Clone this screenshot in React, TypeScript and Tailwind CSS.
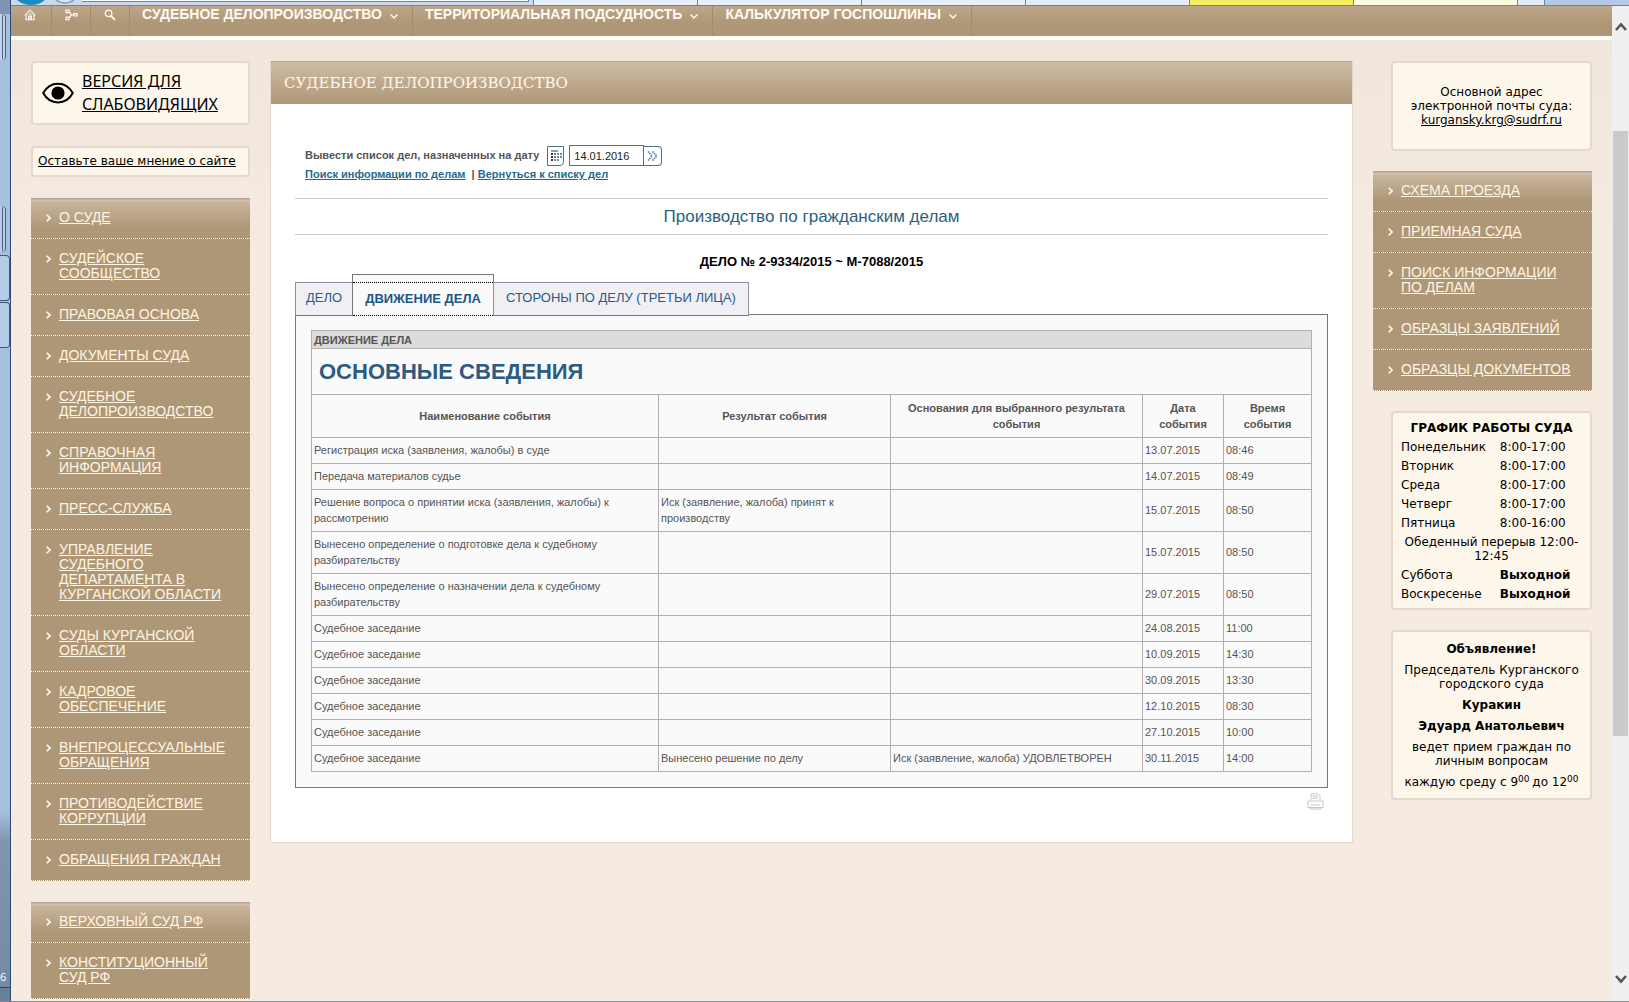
import React from 'react';

const leftMenu = [
  'О СУДЕ',
  'СУДЕЙСКОЕ СООБЩЕСТВО',
  'ПРАВОВАЯ ОСНОВА',
  'ДОКУМЕНТЫ СУДА',
  'СУДЕБНОЕ ДЕЛОПРОИЗВОДСТВО',
  'СПРАВОЧНАЯ ИНФОРМАЦИЯ',
  'ПРЕСС-СЛУЖБА',
  'УПРАВЛЕНИЕ СУДЕБНОГО ДЕПАРТАМЕНТА В КУРГАНСКОЙ ОБЛАСТИ',
  'СУДЫ КУРГАНСКОЙ ОБЛАСТИ',
  'КАДРОВОЕ ОБЕСПЕЧЕНИЕ',
  'ВНЕПРОЦЕССУАЛЬНЫЕ ОБРАЩЕНИЯ',
  'ПРОТИВОДЕЙСТВИЕ КОРРУПЦИИ',
  'ОБРАЩЕНИЯ ГРАЖДАН',
];

const courtsMenu = ['ВЕРХОВНЫЙ СУД РФ', 'КОНСТИТУЦИОННЫЙ СУД РФ'];

const rightMenu = [
  'СХЕМА ПРОЕЗДА',
  'ПРИЕМНАЯ СУДА',
  'ПОИСК ИНФОРМАЦИИ ПО ДЕЛАМ',
  'ОБРАЗЦЫ ЗАЯВЛЕНИЙ',
  'ОБРАЗЦЫ ДОКУМЕНТОВ',
];

const topMenu = ['СУДЕБНОЕ ДЕЛОПРОИЗВОДСТВО', 'ТЕРРИТОРИАЛЬНАЯ ПОДСУДНОСТЬ', 'КАЛЬКУЛЯТОР ГОСПОШЛИНЫ'];

const events = [
  ['Регистрация иска (заявления, жалобы) в суде', '', '', '13.07.2015', '08:46'],
  ['Передача материалов судье', '', '', '14.07.2015', '08:49'],
  [
    'Решение вопроса о принятии иска (заявления, жалобы) к рассмотрению',
    'Иск (заявление, жалоба) принят к производству',
    '',
    '15.07.2015',
    '08:50',
  ],
  ['Вынесено определение о подготовке дела к судебному разбирательству', '', '', '15.07.2015', '08:50'],
  ['Вынесено определение о назначении дела к судебному разбирательству', '', '', '29.07.2015', '08:50'],
  ['Судебное заседание', '', '', '24.08.2015', '11:00'],
  ['Судебное заседание', '', '', '10.09.2015', '14:30'],
  ['Судебное заседание', '', '', '30.09.2015', '13:30'],
  ['Судебное заседание', '', '', '12.10.2015', '08:30'],
  ['Судебное заседание', '', '', '27.10.2015', '10:00'],
  ['Судебное заседание', 'Вынесено решение по делу', 'Иск (заявление, жалоба) УДОВЛЕТВОРЕН', '30.11.2015', '14:00'],
];

const hours = [
  ['Понедельник', '8:00-17:00'],
  ['Вторник', '8:00-17:00'],
  ['Среда', '8:00-17:00'],
  ['Четверг', '8:00-17:00'],
  ['Пятница', '8:00-16:00'],
];

const Card: React.FC<{ className?: string; children: React.ReactNode }> = ({ className = '', children }) => (
  <section className={`rounded border-2 border-[#e3d9cd] bg-[#fdf6eb] text-black ${className}`}>{children}</section>
);

const SideMenu: React.FC<{ items: string[]; label: string }> = ({ items, label }) => (
  <nav
    aria-label={label}
    className="bg-[#ae9777] bg-[linear-gradient(to_bottom,#b5a48e_0px,#b5a48e_1px,#d3c3b0_2px,#c7b49b_5px,#ae9777_30px)]"
  >
    <ul>
      {items.map((item) => (
        <li key={item} className="flex gap-2 border-b border-dotted border-[#fff8ea] pt-3 pr-4 pb-[13px] pl-[15px]">
          <svg className="mt-1 h-2 w-[5px] shrink-0" viewBox="0 0 5 8" fill="none" stroke="#fff8ea" strokeWidth="1.6">
            <path d="M0.7 0.7 4 4 0.7 7.3" />
          </svg>
          <a href="#" className="text-sm leading-[15px] text-[#fff5e2] underline">
            {item}
          </a>
        </li>
      ))}
    </ul>
  </nav>
);

const BrowserTop: React.FC = () => (
  <div className="flex h-[6px] shrink-0 overflow-hidden border-b border-[#77809a] bg-[#c9daee]">
    <svg className="h-[5px] w-[71px] shrink-0" viewBox="0 0 71 5">
      <ellipse cx="20" cy="-9" rx="18" ry="14" fill="#1a8bbf" />
      <circle cx="54" cy="-11" r="14" fill="#dbe6f2" stroke="#8b9bb0" strokeWidth="1.5" />
    </svg>
    <div className="mb-[3px] w-[447px] border-r border-b border-[#77809a] bg-white" />
    <div className="ml-1 flex-1 border-x border-[#77809a] bg-[#e6effa]" />
    <div className="flex-1 border-r border-[#77809a] bg-[#e6effa]" />
    <div className="flex-1 border-r border-[#77809a] bg-[#e6effa]" />
    <div className="flex-1 border-r border-[#77809a] bg-[#e1edf9]" />
    <div className="flex-1 border-r border-[#77809a] bg-[#f7ef62]" />
    <div className="flex-1 border-r border-[#77809a] bg-[#fdfbe0]" />
    <div className="w-[27px] border-r border-[#77809a] bg-[#e1ebf7]" />
    <div className="w-[84px] bg-[#b3cae6]" />
  </div>
);

const DesktopEdge: React.FC = () => (
  <div className="flex w-[11px] shrink-0 flex-col border-r border-[#2d4a70] bg-[linear-gradient(to_bottom,#a5c0de_0%,#a5c0de_81%,#8095af_84%,#7388a3_100%)]">
    <div className="h-[14px] bg-[#8095b3]" />
    <div className="mr-1 h-[46px] rounded-r border-r-4 border-double border-[#4a607d] bg-[#c3d5ea]" />
    <div className="h-[146px]" />
    <div className="mr-1 h-[46px] rounded-r border-r-4 border-double border-[#4a607d] bg-[#b9cee6]" />
    <div className="mt-[3px] h-[46px] rounded-r border border-l-0 border-[#40587a] bg-[#b5cce6]" />
    <div className="mt-px h-[46px] rounded-r border border-l-0 border-[#40587a] bg-[#b5cce6]" />
    <div className="mt-auto font-['Open_Sans',sans-serif] text-[11px] leading-5 text-white">6</div>
    <div className="h-[14px] border-t border-[#33475f] bg-[#687f98]" />
  </div>
);

const TopNav: React.FC = () => (
  <nav
    aria-label="Главное меню"
    className="flex h-[34px] shrink-0 border-b-4 border-[#fffdf8] bg-[linear-gradient(to_bottom,#bda58a_0px,#ae9777_18px,#ae9777_30px)] text-[#fffaf0]"
  >
    <a href="#" aria-label="Главная" className="w-[41px] border-r border-[#a38c6d] pt-[3px] pl-[13px]">
      <svg width="12" height="12" viewBox="0 0 12 12" fill="none" stroke="currentColor" strokeWidth="1.1">
        <path d="M0.8 6.3 6 1.2 11.2 6.3M2 5.6V10.8H10V5.6M4.5 10.8V7H7.5V10.8M6 7V10.8M4.5 5H7.5" />
      </svg>
    </a>
    <a href="#" aria-label="Карта сайта" className="w-[39px] border-r border-[#a38c6d] pt-[3px] pl-[13px]">
      <svg width="13" height="12" viewBox="0 0 13 12" fill="none" stroke="currentColor" strokeWidth="1.2">
        <path d="M1 1.2H4V3.6H1ZM1 8.2H4V10.6H1ZM9 4.6H12V7H9ZM4 2.4 6.4 5.8H9M4 9.4 6.4 5.8" />
      </svg>
    </a>
    <a href="#" aria-label="Поиск" className="w-[39px] border-r border-[#a38c6d] pt-[3px] pl-[13px]">
      <svg width="12" height="12" viewBox="0 0 12 12" fill="none" stroke="currentColor" strokeWidth="1.3">
        <circle cx="4.6" cy="4.4" r="3.3" />
        <path d="M7 6.8 11 10.8" strokeWidth="1.8" />
      </svg>
    </a>
    {topMenu.map((item) => (
      <a key={item} href="#" className="flex gap-2 border-r border-[#a38c6d] pr-[14px] pl-3 text-sm leading-4 font-bold">
        {item}
        <svg className="mt-2 h-[5px] w-2" viewBox="0 0 8 5" fill="none" stroke="currentColor" strokeWidth="1.4">
          <path d="M0.6 0.6 4 4 7.4 0.6" />
        </svg>
      </a>
    ))}
  </nav>
);

const DateForm: React.FC = () => (
  <form className="flex items-center text-[11px] font-bold text-[#555]" onSubmit={(e) => e.preventDefault()}>
    <label htmlFor="hearing-date">Вывести список дел, назначенных на дату</label>
    <button
      type="button"
      aria-label="Календарь"
      className="mr-[5px] ml-2 flex h-5 w-[17px] items-center justify-center rounded-br border border-[#49758a] bg-white"
    >
      <svg width="12" height="12" viewBox="0 0 12 12" fill="none">
        <path d="M1 1H8" stroke="#333" />
        <path d="M2 3V12" stroke="#333" strokeDasharray="2 1" strokeWidth="2" />
        <path d="M4 4H12M4 7H12M4 10H10" stroke="#6c87a0" strokeDasharray="2 1" strokeWidth="2" />
      </svg>
    </button>
    <input
      id="hearing-date"
      type="text"
      defaultValue="14.01.2016"
      className="h-[21px] w-[75px] border border-[#49758a] bg-white px-1 text-[11px] font-normal text-[#222]"
    />
    <button
      type="submit"
      aria-label="Показать"
      className="flex h-5 w-[18px] items-center justify-center rounded-r border border-l-0 border-[#49758a] bg-white"
    >
      <svg width="11" height="10" viewBox="0 0 11 10" fill="none" stroke="#5d8aa8" strokeWidth="1.7" strokeDasharray="1.6 0.6">
        <path d="M1 0.5 5.2 5 1 9.5M5.4 0.5 9.8 5 5.4 9.5" />
      </svg>
    </button>
  </form>
);

const CaseTable: React.FC = () => (
  <table className="w-full table-fixed border-collapse text-[11px] leading-4 text-[#555] [&_td]:border [&_td]:border-[#b0b0b0] [&_th]:border [&_th]:border-[#b0b0b0]">
    <colgroup>
      <col className="w-[34.7%]" />
      <col className="w-[23.2%]" />
      <col className="w-[25.2%]" />
      <col className="w-[8.1%]" />
      <col />
    </colgroup>
    <thead>
      <tr>
        <th colSpan={5} className="bg-[#dcdcdc] px-[2px] pt-px text-left">
          ДВИЖЕНИЕ ДЕЛА
        </th>
      </tr>
      <tr>
        <th colSpan={5} className="h-[46px] px-[7px] text-left text-[22px] text-[#2e5b80]">
          ОСНОВНЫЕ СВЕДЕНИЯ
        </th>
      </tr>
      <tr className="h-[43px]">
        <th className="px-3">Наименование события</th>
        <th className="px-3">Результат события</th>
        <th className="px-3">Основания для выбранного результата события</th>
        <th className="px-3">Дата события</th>
        <th className="px-3">Время события</th>
      </tr>
    </thead>
    <tbody>
      {events.map((row, i) => (
        <tr key={i}>
          {row.map((cell, j) => (
            <td key={j} className="px-[2px] pt-1 pb-[5px]">
              {cell}
            </td>
          ))}
        </tr>
      ))}
    </tbody>
  </table>
);

const CaseTabs: React.FC = () => (
  <div role="tablist" className="relative z-10 flex items-end text-[13px] text-[#2a5a86]">
    <button role="tab" aria-selected="false" className="h-[34px] border border-[#8f8fa8] border-b-[#777] bg-[#efeff4] px-[10px] pb-[2px]">
      ДЕЛО
    </button>
    <button role="tab" aria-selected="true" className="-mx-px h-[42px] border border-[#777] border-b-0 bg-[#fafafa] pt-[7px] font-bold text-[#1c5689]">
      <span className="flex h-[34px] items-center border-y border-dotted border-black px-3">ДВИЖЕНИЕ ДЕЛА</span>
    </button>
    <button role="tab" aria-selected="false" className="h-[34px] border border-[#8f8fa8] border-b-[#777] bg-[#efeff4] px-3 pb-[2px]">
      СТОРОНЫ ПО ДЕЛУ (ТРЕТЬИ ЛИЦА)
    </button>
  </div>
);

const Printer: React.FC = () => (
  <svg width="17" height="17" viewBox="0 0 17 17" fill="none" stroke="#c6c6c6">
    <path d="M4 7V0.8H11L13 2.5V7M1 8H16V14.5H1ZM4 12H13M3 14.5V16H14V14.5M5.5 3.2H11M5.5 5.3H11" />
  </svg>
);

const Main: React.FC = () => (
  <main className="min-w-0 flex-1 self-start border border-t-0 border-[#e3d8ca] bg-white">
    <h1 className="h-[43px] border-t border-[#b5a48e] bg-[linear-gradient(to_bottom,#cdbca5,#bfa98d_50%,#ae9777)] pl-[13px] font-['DejaVu_Serif',serif] text-[15px] leading-[42px] text-[#fff8ea]">
      СУДЕБНОЕ ДЕЛОПРОИЗВОДСТВО
    </h1>
    <div className="px-6 pt-[41px] pb-8">
      <div className="px-[10px] pb-[15px]">
        <DateForm />
        <p className="text-[11px] leading-[17px] font-bold text-[#555]">
          <a href="#" className="text-[#256b8f] underline">Поиск информации по делам</a>
          &nbsp; |{' '}
          <a href="#" className="text-[#256b8f] underline">Вернуться к списку дел</a>
        </p>
      </div>
      <h2 className="border-y border-[#c8c8c8] text-center text-[17px] leading-[35px] text-[#2b5f82]">
        Производство по гражданским делам
      </h2>
      <p className="mt-[18px] mb-[3px] text-center text-[13px] leading-[18px] font-bold text-black">ДЕЛО № 2-9334/2015 ~ М-7088/2015</p>
      <CaseTabs />
      <div className="-mt-[2px] border border-[#777] bg-[#fafafa] p-[15px]">
        <CaseTable />
      </div>
      <div className="flex justify-end pt-[5px] pr-1">
        <a href="#" aria-label="Печать">
          <Printer />
        </a>
      </div>
    </div>
  </main>
);

const LeftColumn: React.FC = () => (
  <aside className="flex w-[219px] shrink-0 flex-col gap-[21px]">
    <Card className="flex h-16 items-center gap-2 pl-[9px]">
      <svg className="h-[22px] w-8 shrink-0" viewBox="0 0 32 22" fill="none" stroke="#000" strokeWidth="2">
        <path d="M1.2 11C8 -1.5 24 -1.5 30.8 11C24 23.5 8 23.5 1.2 11Z" />
        <circle cx="16" cy="11" r="5.6" fill="#000" />
      </svg>
      <a href="#" className="font-['Noto_Sans',sans-serif] text-base leading-[23px] underline">
        ВЕРСИЯ ДЛЯ СЛАБОВИДЯЩИХ
      </a>
    </Card>
    <Card className="px-[5px] text-xs leading-[27px] whitespace-nowrap">
      <a href="#" className="font-['DejaVu_Sans',sans-serif] underline">Оставьте ваше мнение о сайте</a>
    </Card>
    <SideMenu items={leftMenu} label="Разделы сайта" />
    <SideMenu items={courtsMenu} label="Суды" />
  </aside>
);

const RightColumn: React.FC = () => (
  <aside className="flex w-[219px] shrink-0 flex-col gap-5 font-['DejaVu_Sans',sans-serif] text-xs leading-[14px]">
    <Card className="ml-[18px] px-2 py-[22px] text-center">
      <p>Основной адрес электронной почты суда:</p>
      <a href="mailto:kurgansky.krg@sudrf.ru" className="underline">kurgansky.krg@sudrf.ru</a>
    </Card>
    <div className="font-['Liberation_Sans',Arial,sans-serif]">
      <SideMenu items={rightMenu} label="Полезные ссылки" />
    </div>
    <Card className="ml-[18px] px-2 pt-[6px] pb-1">
      <table className="w-full [&_td]:py-[2px] [&_td]:pb-[3px]">
        <caption className="py-[2px] pb-[3px] font-bold whitespace-nowrap">ГРАФИК РАБОТЫ СУДА</caption>
        <tbody>
          {hours.map(([day, time]) => (
            <tr key={day}>
              <td>{day}</td>
              <td>{time}</td>
            </tr>
          ))}
          <tr>
            <td colSpan={2} className="text-center">Обеденный перерыв 12:00-12:45</td>
          </tr>
          <tr>
            <td>Суббота</td>
            <td className="font-bold">Выходной</td>
          </tr>
          <tr>
            <td>Воскресенье</td>
            <td className="font-bold">Выходной</td>
          </tr>
        </tbody>
      </table>
    </Card>
    <Card className="ml-[18px] flex flex-col gap-[7px] px-2 pt-[10px] pb-[9px] text-center">
      <p className="font-bold">Объявление!</p>
      <p>Председатель Курганского городского суда</p>
      <p className="font-bold">Куракин</p>
      <p className="font-bold">Эдуард Анатольевич</p>
      <p>ведет прием граждан по личным вопросам</p>
      <p className="whitespace-nowrap">
        каждую среду с 9<sup className="text-[9px]">00 </sup>до 12<sup className="text-[9px]">00</sup>
      </p>
    </Card>
  </aside>
);

const Scrollbar: React.FC = () => (
  <div className="flex w-[17px] shrink-0 flex-col items-center bg-[#efefef]">
    <svg className="mt-4 h-[10px] w-3" viewBox="0 0 12 10" fill="none" stroke="#555" strokeWidth="2.6">
      <path d="M1 8 6 2.5 11 8" />
    </svg>
    <div className="mt-[99px] h-[605px] w-[15px] bg-[#cacaca]" />
    <svg className="mt-auto mb-[17px] h-[10px] w-3" viewBox="0 0 12 10" fill="none" stroke="#555" strokeWidth="2.6">
      <path d="M1 2 6 7.5 11 2" />
    </svg>
  </div>
);

const App: React.FC = () => {
  return (
    <div className="flex h-screen overflow-hidden border-b border-[#8a8a8a] font-['Liberation_Sans',Arial,sans-serif]">
      <DesktopEdge />
      <div className="flex min-w-0 flex-1 flex-col">
        <BrowserTop />
        <div className="flex min-h-0 flex-1">
          <div className="flex min-w-0 flex-1 flex-col bg-[linear-gradient(to_bottom,#f0e5da,#f5ebe1_25%)]">
            <TopNav />
            <div className="flex min-h-0 flex-1 gap-5 overflow-hidden px-5 pt-[21px]">
              <LeftColumn />
              <Main />
              <RightColumn />
            </div>
          </div>
          <Scrollbar />
        </div>
      </div>
    </div>
  );
};

export default App;
